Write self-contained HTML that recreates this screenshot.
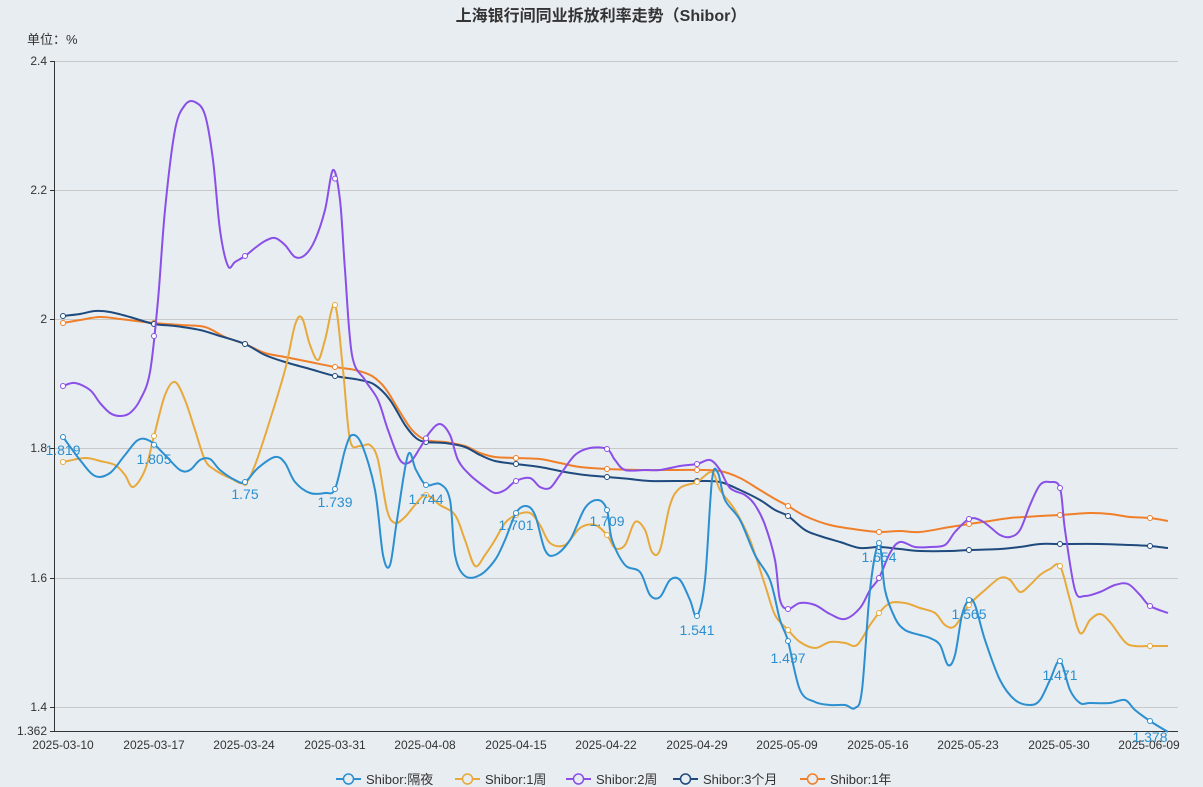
<!DOCTYPE html>
<html><head><meta charset="utf-8"><style>
html,body{margin:0;padding:0;background:#e8edf1;width:1203px;height:787px;overflow:hidden}
svg{display:block;font-family:"Liberation Sans","Noto Sans CJK SC",sans-serif}
</style></head><body>
<svg id="c" width="1203" height="787" xmlns="http://www.w3.org/2000/svg">
<rect width="1203" height="787" fill="#e8edf1"/>
<text x="601" y="21" text-anchor="middle" font-size="16" font-weight="bold" fill="#333">上海银行间同业拆放利率走势（Shibor）</text>
<text x="27" y="44" font-size="13" fill="#333">单位：%</text>
<g stroke="#c8c8c8" stroke-width="1">
<line x1="55" y1="61.5" x2="1178" y2="61.5"/><line x1="55" y1="190.5" x2="1178" y2="190.5"/><line x1="55" y1="319.5" x2="1178" y2="319.5"/><line x1="55" y1="448.5" x2="1178" y2="448.5"/><line x1="55" y1="578.5" x2="1178" y2="578.5"/><line x1="55" y1="707.5" x2="1178" y2="707.5"/>
</g>
<g stroke="#333" stroke-width="1">
<line x1="54.5" y1="61" x2="54.5" y2="732"/><line x1="54" y1="731.5" x2="1178" y2="731.5"/>
<line x1="50" y1="61.5" x2="54" y2="61.5"/><line x1="50" y1="190.5" x2="54" y2="190.5"/><line x1="50" y1="319.5" x2="54" y2="319.5"/><line x1="50" y1="448.5" x2="54" y2="448.5"/><line x1="50" y1="578.5" x2="54" y2="578.5"/><line x1="50" y1="707.5" x2="54" y2="707.5"/><line x1="50" y1="731.5" x2="54" y2="731.5"/>
</g>
<g font-size="12" fill="#333" text-anchor="end">
<text x="47" y="65">2.4</text><text x="47" y="194">2.2</text><text x="47" y="323">2</text><text x="47" y="452">1.8</text><text x="47" y="582">1.6</text><text x="47" y="711">1.4</text><text x="47" y="735">1.362</text>
</g>
<g font-size="12" fill="#333" text-anchor="middle" id="xl"></g>
<g id="lines"></g>
<g font-size="14" fill="#2b8fd0" text-anchor="middle">
<text x="63" y="455">1.819</text><text x="154" y="464">1.805</text><text x="245" y="499">1.75</text><text x="335" y="507">1.739</text><text x="426" y="504">1.744</text><text x="516" y="530">1.701</text><text x="607" y="526">1.709</text><text x="697" y="635">1.541</text><text x="788" y="663">1.497</text><text x="879" y="562">1.654</text><text x="969" y="619">1.565</text><text x="1060" y="680">1.471</text><text x="1150" y="742">1.378</text>
</g>
<g font-size="13" fill="#333" id="lg"></g>
</svg>
<script>
var ns="http://www.w3.org/2000/svg";
var xs=[63,154,245,335,426,516,607,697,788,879,969,1060,1150];
var dl=["2025-03-10","2025-03-17","2025-03-24","2025-03-31","2025-04-08","2025-04-15","2025-04-22","2025-04-29","2025-05-09","2025-05-16","2025-05-23","2025-05-30","2025-06-09"];
var xl=document.getElementById("xl");
dl.forEach(function(d,i){var t=document.createElementNS(ns,"text");t.setAttribute("x",Math.round(55+i*90.5+8));t.setAttribute("y",749);t.textContent=d;xl.appendChild(t);});
var C={b:"#2b8fd0",y:"#e8a93c",p:"#8a4fe8",n:"#1e4a7e",o:"#f07f2a"};
var D={
b:[[63,437],[80,460],[95,476],[110,473],[125,455],[138,440],[150,441],[165,455],[180,470],[190,470],[200,460],[210,459],[220,470],[235,480],[245,482],[258,468],[275,457],[285,463],[295,482],[310,493],[325,493],[335,489],[345,450],[352,435],[362,445],[375,490],[383,555],[390,565],[397,520],[408,455],[416,470],[426,485],[440,484],[450,500],[455,555],[465,576],[480,575],[495,560],[505,540],[516,513],[526,506],[535,515],[545,550],[555,555],[570,540],[585,508],[598,500],[607,510],[612,540],[625,565],[640,572],[650,595],[660,597],[670,580],[680,580],[690,600],[697,616],[705,580],[712,480],[718,473],[725,500],[740,520],[755,555],[770,580],[780,620],[788,641],[800,690],[815,702],[830,705],[845,705],[855,708],[862,690],[870,590],[879,543],[885,590],[895,618],[905,630],[920,635],[930,638],[940,645],[948,665],[955,655],[962,615],[969,600],[975,605],[985,640],[1000,680],[1015,700],[1030,705],[1040,700],[1050,680],[1060,661],[1070,690],[1080,703],[1090,703],[1110,703],[1125,700],[1135,710],[1150,721],[1168,732]],
y:[[63,462],[85,458],[100,461],[115,465],[125,475],[133,487],[145,470],[154,436],[165,395],[175,382],[185,400],[195,430],[205,460],[215,470],[230,478],[245,483],[255,465],[270,420],[285,370],[295,325],[302,318],[310,345],[318,360],[325,340],[335,305],[343,370],[350,440],[360,446],[370,445],[378,460],[387,510],[395,523],[405,517],[415,505],[426,495],[440,505],[455,515],[465,540],[475,566],[485,555],[495,540],[505,523],[516,515],[530,513],[540,525],[550,543],[565,545],[580,528],[595,525],[607,535],[615,548],[625,545],[635,522],[645,530],[652,552],[660,550],[670,505],[680,488],[697,482],[712,472],[720,490],[735,510],[750,540],[765,585],[775,615],[788,630],[800,642],[815,648],[830,642],[845,643],[857,645],[870,625],[879,613],[890,603],[905,603],[920,608],[935,613],[945,625],[955,626],[969,605],[985,590],[1000,578],[1010,580],[1020,592],[1030,585],[1040,575],[1050,569],[1060,566],[1070,600],[1080,633],[1090,620],[1100,614],[1110,622],[1125,642],[1135,646],[1150,646],[1168,646]],
p:[[63,386],[75,383],[90,390],[100,403],[110,413],[120,416],[130,413],[140,400],[150,372],[158,300],[165,210],[175,130],[185,105],[195,102],[205,115],[213,160],[220,230],[228,266],[235,262],[245,256],[255,248],[265,241],[275,238],[285,245],[295,257],[305,255],[315,240],[325,210],[333,170],[340,200],[345,270],[352,355],[365,380],[378,400],[388,430],[400,460],[410,462],[420,448],[430,432],[440,424],[450,435],[458,460],[470,475],[485,487],[495,493],[505,490],[516,481],[530,478],[540,487],[550,488],[560,475],[575,455],[590,448],[607,449],[615,460],[625,470],[645,470],[660,470],[680,466],[697,464],[710,460],[720,470],[730,488],[745,495],[755,505],[765,525],[775,560],[780,600],[788,609],[800,603],[815,605],[830,614],[845,619],[860,608],[870,590],[879,578],[890,553],[900,542],[915,547],[930,547],[945,545],[955,532],[969,519],[980,520],[990,527],[1000,535],[1010,537],[1020,530],[1030,505],[1040,485],[1050,482],[1060,488],[1065,530],[1075,590],[1085,596],[1100,592],[1115,585],[1128,584],[1140,595],[1150,606],[1168,613]],
n:[[63,316],[80,314],[95,311],[110,312],[130,317],[154,324],[175,326],[200,330],[220,336],[245,344],[265,355],[285,362],[310,369],[335,376],[360,380],[375,385],[390,400],[405,425],[416,438],[426,442],[445,443],[465,447],[480,455],[495,461],[516,464],[540,467],[565,472],[585,475],[607,477],[630,479],[650,481],[697,481],[720,482],[740,490],[760,500],[775,510],[788,516],[805,530],[820,536],[840,542],[860,548],[879,547],[900,549],[920,551],[950,551],[969,550],[1000,549],[1020,547],[1040,544],[1060,544],[1100,544],[1130,545],[1150,546],[1168,548]],
o:[[63,323],[80,320],[100,317],[120,319],[154,323],[180,325],[205,327],[225,337],[245,344],[265,353],[285,357],[310,362],[335,367],[355,370],[372,376],[385,388],[400,412],[412,430],[426,440],[445,442],[465,446],[480,453],[495,457],[516,458],[540,459],[560,463],[580,467],[607,469],[640,470],[670,470],[697,470],[720,471],[740,478],[760,490],[775,499],[788,506],[805,516],[830,525],[860,530],[879,532],[900,531],[920,532],[950,527],[969,524],[990,521],[1010,518],[1040,516],[1060,515],[1090,513],[1110,514],[1130,517],[1150,518],[1168,521]]};
function path(p){var d="M"+p[0][0]+","+p[0][1];for(var i=0;i<p.length-1;i++){var p0=p[i-1]||p[i],p1=p[i],p2=p[i+1],p3=p[i+2]||p2;var c1x=p1[0]+(p2[0]-p0[0])/6,c1y=p1[1]+(p2[1]-p0[1])/6,c2x=p2[0]-(p3[0]-p1[0])/6,c2y=p2[1]-(p3[1]-p1[1])/6;d+="C"+c1x.toFixed(1)+","+c1y.toFixed(1)+" "+c2x.toFixed(1)+","+c2y.toFixed(1)+" "+p2[0]+","+p2[1];}return d;}
function yAt(p,x){if(x<=p[0][0])return p[0][1];for(var i=1;i<p.length;i++)if(p[i][0]>=x){var a=p[i-1],b=p[i];return a[1]+(b[1]-a[1])*(x-a[0])/(b[0]-a[0]);}return p[p.length-1][1];}
var g=document.getElementById("lines");
["o","n","p","y","b"].forEach(function(k){var e=document.createElementNS(ns,"path");e.setAttribute("d",path(D[k]));e.setAttribute("fill","none");e.setAttribute("stroke",C[k]);e.setAttribute("stroke-width","2");g.appendChild(e);
xs.forEach(function(x){var c=document.createElementNS(ns,"circle");c.setAttribute("cx",x);c.setAttribute("cy",yAt(D[k],x).toFixed(1));c.setAttribute("r","2.5");c.setAttribute("fill","#fff");c.setAttribute("stroke",C[k]);c.setAttribute("stroke-width","1");g.appendChild(c);});});
var lg=document.getElementById("lg");
var items=[["b","Shibor:隔夜",336],["y","Shibor:1周",455],["p","Shibor:2周",566],["n","Shibor:3个月",673],["o","Shibor:1年",800]];
items.forEach(function(it){var x=it[2];var l=document.createElementNS(ns,"line");l.setAttribute("x1",x);l.setAttribute("x2",x+25);l.setAttribute("y1",779);l.setAttribute("y2",779);l.setAttribute("stroke",C[it[0]]);l.setAttribute("stroke-width","2");lg.appendChild(l);
var c=document.createElementNS(ns,"circle");c.setAttribute("cx",x+12.5);c.setAttribute("cy",779);c.setAttribute("r","5");c.setAttribute("fill","#e8edf1");c.setAttribute("stroke",C[it[0]]);c.setAttribute("stroke-width","1.5");lg.appendChild(c);
var t=document.createElementNS(ns,"text");t.setAttribute("x",x+30);t.setAttribute("y",784);t.textContent=it[1];lg.appendChild(t);});
</script>
</body></html>
